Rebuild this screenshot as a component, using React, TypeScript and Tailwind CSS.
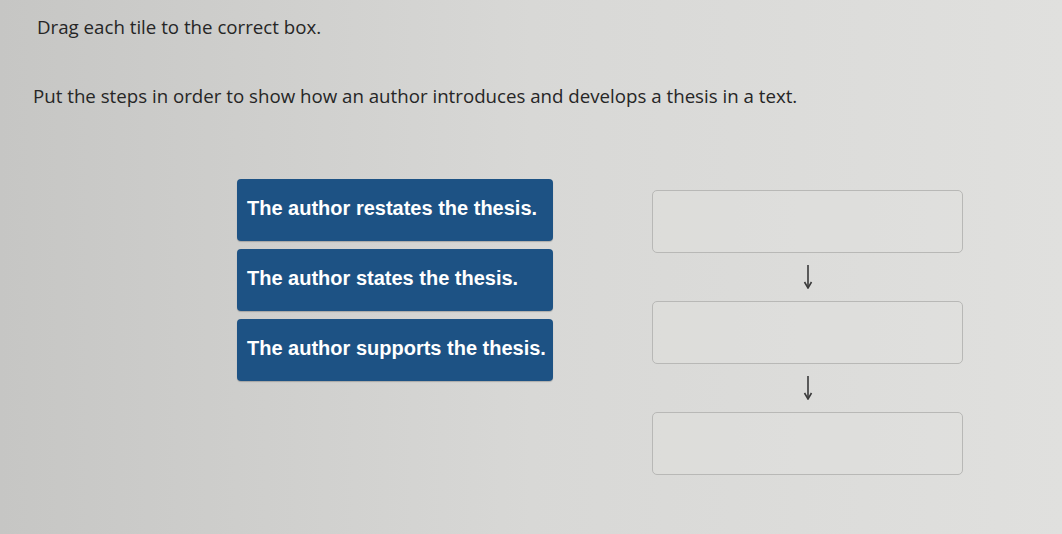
const tiles = [
  "The author restates the thesis.",
  "The author states the thesis.",
  "The author supports the thesis.",
];

function Tile({ label }: { label: string }) {
  return (
    <div className="flex h-[62px] items-center whitespace-nowrap rounded-[4px] bg-[#1d5284] pb-[4px] pl-[10px] pr-[4px] font-['Liberation_Sans',Arial,sans-serif] text-[20px] font-bold text-white shadow-[0_1px_1px_rgba(0,0,0,0.2)]">
      {label}
    </div>
  );
}

function DropBox() {
  return <div className="h-[63px] rounded-[5px] border border-[#b8b8b6] bg-[#e1e1df]/40" />;
}

function Arrow() {
  return (
    <div className="flex h-[48px] items-center justify-center">
      <svg width="10" height="24" viewBox="0 0 10 24" className="text-[#3a3a3a]">
        <line x1="5" y1="0" x2="5" y2="21" stroke="currentColor" strokeWidth="1.6" />
        <path d="M1.5 17 L5 23 L8.5 17" fill="none" stroke="currentColor" strokeWidth="1.6" />
      </svg>
    </div>
  );
}

export default function App() {
  return (
    <div className="min-h-screen w-full bg-gradient-to-r from-[#c6c6c4] via-[#d8d8d6] to-[#e0e0de] font-['Open_Sans',sans-serif] text-[#262626]">
      <p className="pl-[37px] pt-[14px] text-[18.7px] leading-[25px]">Drag each tile to the correct box.</p>
      <p className="mt-[44px] pl-[33px] text-[18.7px] leading-[25px]">
        Put the steps in order to show how an author introduces and develops a thesis in a text.
      </p>

      <div className="mt-[71px] flex items-start">
        <div className="ml-[237px] flex w-[316px] flex-col gap-[8px]">
          {tiles.map((t) => (
            <Tile key={t} label={t} />
          ))}
        </div>

        <div className="ml-[99px] mt-[11px] flex w-[311px] flex-col">
          <DropBox />
          <Arrow />
          <DropBox />
          <Arrow />
          <DropBox />
        </div>
      </div>
    </div>
  );
}
